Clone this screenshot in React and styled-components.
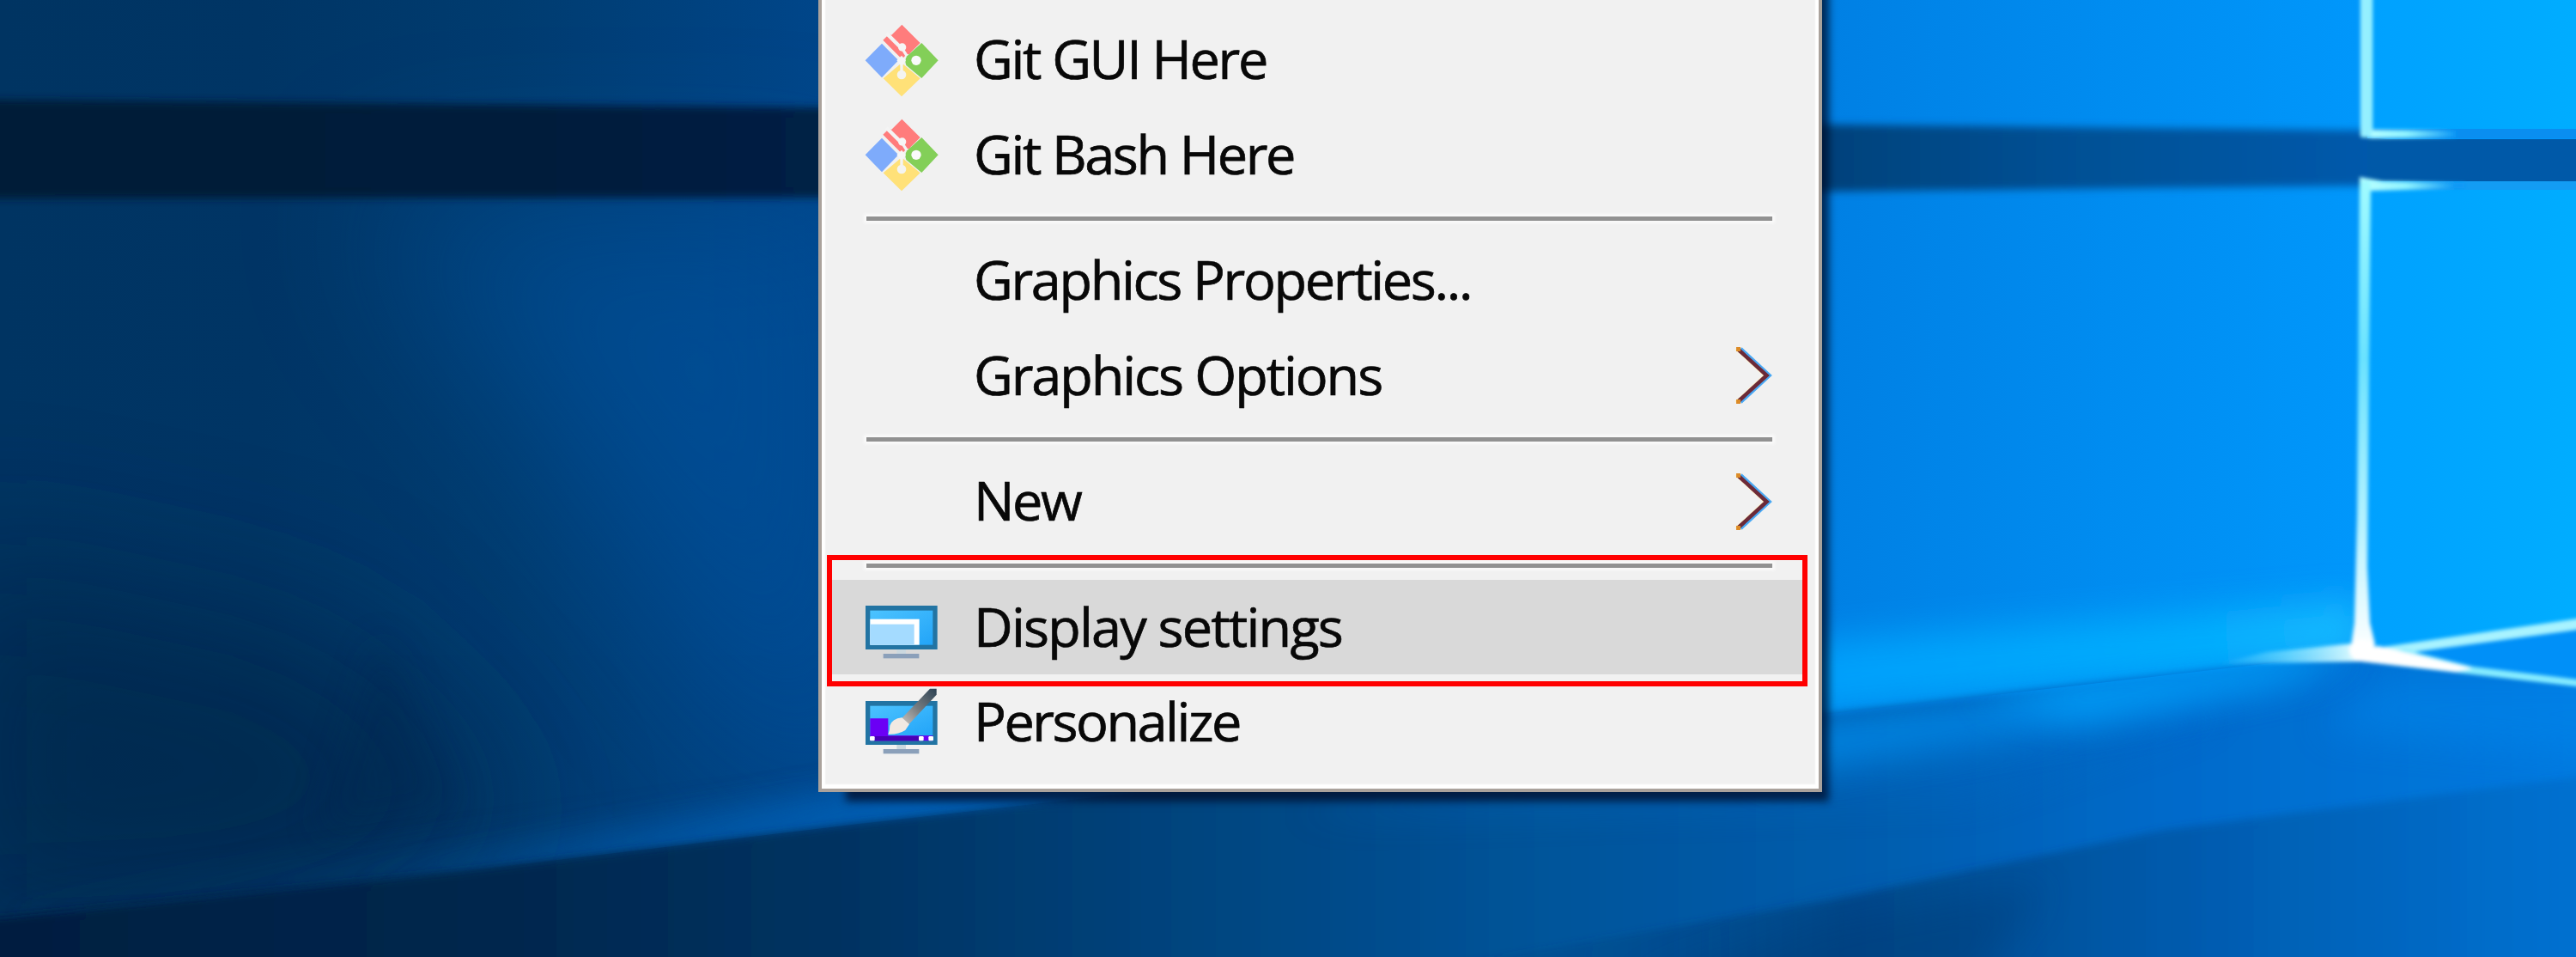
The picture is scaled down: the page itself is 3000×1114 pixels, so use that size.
import React from "react";
import styled, { createGlobalStyle } from "styled-components";

const GlobalStyle = createGlobalStyle`
  html, body { margin: 0; padding: 0; background: #003a70; }
  *, *::before, *::after { box-sizing: border-box; }
`;

const Desktop = styled.main`
  position: relative;
  display: flex;
  align-items: flex-start;
  width: 3000px;
  height: 1114px;
  overflow: hidden;
  font-family: "Open Sans", "Noto Sans", sans-serif;
`;

const WallpaperArt = styled.svg`
  position: absolute;
  inset: 0;
  width: 3000px;
  height: 1114px;
`;

const Menu = styled.nav`
  position: relative;
  display: flex;
  flex-direction: column;
  width: 1169px;
  height: 972px;
  margin-left: 953px;
  margin-top: -50px;
  padding-top: 64.3px;
  background: #f1f1f1;
  border: solid #aaa29c;
  border-width: 0 4px 4px 4px;
  box-shadow:
    inset 5px 0 2px -1px #fff,
    inset -5px 0 2px -1px #fff,
    inset 0 -6px 2px -1px #fff,
    20px 23px 9px -12px rgba(0, 12, 40, 0.75);
`;

const Item = styled.div`
  display: flex;
  align-items: center;
  height: 110.7px;
  flex: none;
  margin: 0 16px 0 9px;
  padding: 0 39px 0 42px;
  background: ${(p) => (p.$active ? "#d9d9d9" : "transparent")};
`;

const IconSlot = styled.span`
  display: flex;
  width: 84px;
  height: 84px;
  margin-right: 42px;

  svg {
    width: 84px;
    height: 84px;
    overflow: visible;
  }
`;

const Label = styled.span`
  flex: 1;
  margin-top: -3px;
  font-size: 63px;
  line-height: 80px;
  letter-spacing: ${(p) => p.$tracking}px;
  white-space: nowrap;
  color: #080808;
  -webkit-text-stroke: 0.7px #080808;
`;

const Separator = styled.div`
  flex: none;
  height: 5px;
  margin: 16.5px 54px 14.2px 52px;
  background: #919191;
  box-shadow: 0 0 3px 3px #fafafa;
`;

const ChevronArt = styled.svg`
  width: 42px;
  height: 66px;
  overflow: visible;
`;

const Highlight = styled.div`
  position: absolute;
  left: 963px;
  top: 646px;
  width: 1142px;
  height: 153px;
  border: 6px solid #ff0000;
`;

function GitIcon() {
  return (
    <svg viewBox="55 54 252 252">
      <path d="M182 56 L246 120 L213 153 Q208 164 200 158 L182 176 L116 110 L134 92 L146 92 Z" fill="#ff7c7c" />
      <path d="M128 86 L178 136" stroke="#f4f4f4" strokeWidth="13" />
      <circle cx="183" cy="135" r="14" fill="#f6f6f6" />
      <path d="M187 146 L200 166" stroke="#f4f4f4" strokeWidth="10" />
      <path d="M112 122 L170 181 L112 241 L54 181 Z" fill="#7eabfb" />
      <path d="M251 120 L309 181 L251 243 L197 198 Q190 181 200 166 Z" fill="#83cf58" />
      <circle cx="232" cy="181" r="17" fill="#fafafa" />
      <path d="M181 190 L246 244 L181 307 L117 244 Z" fill="#ffe178" />
      <path d="M181 188 V228" stroke="#f4f4f4" strokeWidth="10" />
      <circle cx="181" cy="231" r="16" fill="#f4f4f0" />
      <path d="M164 181 L181 164 L196 181 L181 202 Z" fill="#f6f6f6" />
    </svg>
  );
}

function ScreenGradient({ id }) {
  return (
    <linearGradient id={id} x1="0" y1="0" x2="1" y2="1">
      <stop offset="0" stopColor="#4cc3ff" />
      <stop offset="1" stopColor="#22a4f8" />
    </linearGradient>
  );
}

function DisplayIcon() {
  return (
    <svg viewBox="57 24 252 252">
      <defs>
        <ScreenGradient id="screenA" />
      </defs>
      <rect x="57" y="75" width="251" height="153" fill="#2274a3" />
      <rect x="73" y="92" width="219" height="120" fill="url(#screenA)" />
      <rect x="73" y="122" width="172" height="90" fill="#fff" />
      <rect x="73" y="140" width="154" height="72" fill="#a4dbff" />
      <rect x="166" y="228" width="32" height="15" fill="#cbd8df" />
      <rect x="119" y="243" width="125" height="16" fill="#8ba0ba" />
    </svg>
  );
}

function PersonalizeIcon() {
  return (
    <svg viewBox="57 357 252 252">
      <defs>
        <ScreenGradient id="screenB" />
        <linearGradient id="handle" x1="1" y1="0" x2="0" y2="1">
          <stop offset="0" stopColor="#2c4254" />
          <stop offset="0.55" stopColor="#777c80" />
          <stop offset="1" stopColor="#c9c4bf" />
        </linearGradient>
      </defs>
      <rect x="57" y="408" width="251" height="153" fill="#2274a3" />
      <rect x="73" y="425" width="219" height="104" fill="url(#screenB)" />
      <path d="M73 469 H136 V529 H292 V547 H73 Z" fill="#6b00f5" />
      <rect x="88" y="531" width="158" height="16" fill="#4a00b4" />
      <rect x="72" y="531" width="17" height="16" rx="4" fill="#fff" />
      <rect x="243" y="531" width="17" height="16" rx="4" fill="#fff" />
      <rect x="277" y="531" width="17" height="16" rx="4" fill="#fff" />
      <path d="M282 365 H305 V386 L208 490 L184 468 Z" fill="url(#handle)" />
      <path d="M184 466 L210 489 L196 510 Q170 526 136 524 Q142 512 142 494 Q150 470 184 466 Z" fill="#f1e9e2" />
      <rect x="166" y="561" width="32" height="15" fill="#cbd8df" />
      <rect x="119" y="576" width="125" height="16" fill="#8ba0ba" />
    </svg>
  );
}

function Chevron() {
  return (
    <ChevronArt viewBox="0 0 42 66" fill="none" strokeWidth="4.5">
      <path d="M6 2 L39.5 33 L6 64" stroke="#48a8f4" />
      <path d="M0.5 2 L34 33 L0.5 64" stroke="#fff3c8" strokeWidth="3" />
      <path d="M2.5 2 L36.5 33 L2.5 64" stroke="#6c2a38" />
      <path d="M1 0 H6 V5 H1 Z M1 61 H6 V66 H1 Z" fill="#dc8b28" stroke="none" />
    </ChevronArt>
  );
}

function Wallpaper() {
  return (
    <WallpaperArt viewBox="0 0 3000 1114" preserveAspectRatio="none">
      <defs>
        <linearGradient id="wall" gradientUnits="userSpaceOnUse" x1="0" y1="0" x2="3000" y2="0">
          <stop offset="0" stopColor="#003462" />
          <stop offset="0.1" stopColor="#003565" />
          <stop offset="0.2" stopColor="#003c70" />
          <stop offset="0.32" stopColor="#00468a" />
          <stop offset="0.71" stopColor="#0080e4" />
          <stop offset="0.8" stopColor="#008aee" />
          <stop offset="0.915" stopColor="#0097fb" />
        </linearGradient>
        <linearGradient id="bar" gradientUnits="userSpaceOnUse" x1="0" y1="0" x2="3000" y2="0">
          <stop offset="0" stopColor="#001a38" />
          <stop offset="0.2" stopColor="#001b3a" />
          <stop offset="0.32" stopColor="#002045" />
          <stop offset="0.71" stopColor="#00427c" />
          <stop offset="0.8" stopColor="#005094" />
          <stop offset="0.92" stopColor="#0059ab" />
          <stop offset="1" stopColor="#0058a6" />
        </linearGradient>
        <linearGradient id="floor" gradientUnits="userSpaceOnUse" x1="0" y1="0" x2="3000" y2="0">
          <stop offset="0" stopColor="#001e40" />
          <stop offset="0.2" stopColor="#00274e" />
          <stop offset="0.33" stopColor="#003362" />
          <stop offset="0.45" stopColor="#00437c" />
          <stop offset="0.6" stopColor="#00549a" />
          <stop offset="0.72" stopColor="#005cac" />
          <stop offset="0.84" stopColor="#006aca" />
          <stop offset="1" stopColor="#007ae0" />
        </linearGradient>
        <linearGradient id="horizonGlow" gradientUnits="userSpaceOnUse" x1="0" y1="1068" x2="2750" y2="760">
          <stop offset="0" stopColor="#003a6c" stopOpacity="0.4" />
          <stop offset="0.36" stopColor="#0064b8" />
          <stop offset="0.76" stopColor="#00a4ff" />
          <stop offset="0.93" stopColor="#00b4ff" />
          <stop offset="1" stopColor="#20c4ff" />
        </linearGradient>
        <linearGradient id="rayLeft" gradientUnits="userSpaceOnUse" x1="2580" y1="0" x2="2750" y2="0">
          <stop offset="0" stopColor="#50d0ff" stopOpacity="0" />
          <stop offset="0.5" stopColor="#74dcff" stopOpacity="0.8" />
          <stop offset="1" stopColor="#e8ffff" />
        </linearGradient>
        <linearGradient id="sill" gradientUnits="userSpaceOnUse" x1="2755" y1="0" x2="2860" y2="0">
          <stop offset="0" stopColor="#b8ffff" />
          <stop offset="0.45" stopColor="#90f4ff" />
          <stop offset="1" stopColor="#0c98f6" />
        </linearGradient>
        <linearGradient id="mullion" gradientUnits="userSpaceOnUse" x1="0" y1="0" x2="0" y2="760">
          <stop offset="0" stopColor="#84ecff" />
          <stop offset="0.28" stopColor="#a0fbff" />
          <stop offset="0.55" stopColor="#6ae2ff" />
          <stop offset="0.8" stopColor="#b4f2ff" />
          <stop offset="1" stopColor="#ffffff" />
        </linearGradient>
        <linearGradient id="pane" gradientUnits="userSpaceOnUse" x1="2760" y1="0" x2="3000" y2="0">
          <stop offset="0" stopColor="#00a1ff" />
          <stop offset="1" stopColor="#00adff" />
        </linearGradient>
        <linearGradient id="lowerFade" gradientUnits="userSpaceOnUse" x1="1700" y1="0" x2="3000" y2="0">
          <stop offset="0" stopColor="#003c74" stopOpacity="0.1" />
          <stop offset="0.35" stopColor="#003468" stopOpacity="0.5" />
          <stop offset="0.65" stopColor="#00407c" stopOpacity="0.38" />
          <stop offset="1" stopColor="#0058a8" stopOpacity="0.28" />
        </linearGradient>
        <filter id="b2" x="-20%" y="-50%" width="140%" height="200%"><feGaussianBlur stdDeviation="2" /></filter>
        <filter id="b5" x="-20%" y="-50%" width="140%" height="200%"><feGaussianBlur stdDeviation="5" /></filter>
        <filter id="b25" x="-50%" y="-50%" width="200%" height="200%"><feGaussianBlur stdDeviation="22" /></filter>
        <filter id="b90" x="-80%" y="-80%" width="260%" height="260%"><feGaussianBlur stdDeviation="90" /></filter>
        <clipPath id="aboveHorizon"><path d="M0 0 H2750 V760 L2130 831 L1000 959 L540 1014 L0 1068 Z" /></clipPath>
        <clipPath id="belowHorizon"><path d="M0 1068 L540 1014 L1000 959 L2130 831 L2750 760 L3000 795 V1114 H0 Z" /></clipPath>
      </defs>

      <rect width="3000" height="1114" fill="url(#wall)" />

      <g clipPath="url(#aboveHorizon)">
        <path d="M430 230 H1000 V960 L820 760 Z" fill="#0054a4" opacity="0.5" filter="url(#b90)" />
        <path d="M-80 640 L380 740 L620 960 L300 1080 L-80 1100 Z" fill="#00264a" opacity="0.7" filter="url(#b90)" />
        <path d="M445 740 L530 940 L370 970 Z" fill="#002850" opacity="0.4" filter="url(#b25)" />
        <path d="M0 1068 L1000 959 L2130 831 L2750 760 V700 L2130 745 L1000 930 L0 1062 Z" fill="url(#horizonGlow)" opacity="0.85" filter="url(#b25)" />
        <path d="M420 1040 L1000 972 L1300 930 V890 L1000 925 Z" fill="#0064bc" opacity="0.7" filter="url(#b25)" />
      </g>

      <path d="M-20 116 L950 125 L2130 145 L2775 152 V216 L2130 223 L950 230 L-20 231 Z" fill="url(#bar)" filter="url(#b5)" />

      <path d="M-20 1070 L540 1014 L1000 959 L2130 831 L2750 760 L3040 800 V1140 H-20 Z" fill="url(#floor)" filter="url(#b5)" />

      <g clipPath="url(#belowHorizon)">
        <path d="M1500 950 L2130 860 L2600 830 L2300 930 Z" fill="#006cc8" opacity="0.3" filter="url(#b25)" />
        <path d="M2750 765 L2700 785 L2480 835 L2050 905 L2050 845 Z" fill="#0090f0" opacity="0.75" filter="url(#b25)" />
        <path d="M2750 745 L2660 790 L2420 835 L2300 810 Z" fill="#00a6ff" opacity="0.8" filter="url(#b25)" />
        <path d="M2780 790 H3060 V880 L2700 850 Z" fill="#0088ee" opacity="0.45" filter="url(#b25)" />
        <path d="M1650 1130 L2130 1048 L2520 966 L3020 902 V1140 H1650 Z" fill="url(#lowerFade)" filter="url(#b5)" />
        <path d="M1900 1150 L2130 1070 L2380 1030 L2300 1150 Z" fill="#003a74" opacity="0.4" filter="url(#b25)" />
      </g>

      <rect x="2757" y="-10" width="260" height="160" fill="url(#pane)" />
      <rect x="2757" y="150" width="260" height="11" fill="#0a8ef0" />
      <rect x="2757" y="162" width="260" height="49" fill="#0059a8" />
      <path d="M2757 218 H3010 V724 L2752 764 Z" fill="url(#pane)" />
      <path d="M2752 762 L3010 725 V800 Z" fill="#0090f8" />
      <rect x="2757" y="211" width="260" height="10" fill="#139cf4" />

      <g filter="url(#b2)">
        <path d="M2749 -10 H2763 V151 L2860 152 V160 L2762 161 L2749 159 Z" fill="url(#sill)" />
        <path d="M2748 206 L2775 211 L2870 213 V219 L2763 222 H2748 Z" fill="url(#sill)" />
        <rect x="2750" y="-10" width="12" height="170" fill="#94f0ff" />
        <path d="M2748 210 H2761 L2757 660 L2760 725 L2766 750 L2752 770 L2738 752 L2742 725 L2745 600 Z" fill="url(#mullion)" />
        <path d="M2750 748 L2750 770 L2580 773 L2640 759 Z" fill="url(#rayLeft)" />
        <path d="M2748 757 L3010 719 V732 L2760 766 Z" fill="#a8f3ff" />
        <path d="M2750 762 L2800 756 L2880 776 L3010 792 V800 L2870 784 L2750 770 Z" fill="#86ecff" />
        <path d="M2750 770 L2735 756 L2770 752 L2880 778 L2860 782 Z" fill="#ffffff" />
        <ellipse cx="2751" cy="757" rx="15" ry="13" fill="#ffffff" />
      </g>
    </WallpaperArt>
  );
}

const SEPARATOR = "separator";

const entries = [
  { label: "Git GUI Here", icon: GitIcon, tracking: -2.35 },
  { label: "Git Bash Here", icon: GitIcon, tracking: -2.4 },
  SEPARATOR,
  { label: "Graphics Properties...", tracking: -2.35 },
  { label: "Graphics Options", submenu: true, tracking: -2.1 },
  SEPARATOR,
  { label: "New", submenu: true, tracking: -2.4 },
  SEPARATOR,
  { label: "Display settings", icon: DisplayIcon, active: true, tracking: -1.82 },
  { label: "Personalize", icon: PersonalizeIcon, tracking: -2.5 },
];

export default function App() {
  return (
    <Desktop>
      <GlobalStyle />
      <Wallpaper />
      <Menu>
        {entries.map((entry, i) => {
          if (entry === SEPARATOR) return <Separator key={i} />;
          const Icon = entry.icon;
          return (
            <Item key={i} $active={entry.active}>
              <IconSlot>{Icon && <Icon />}</IconSlot>
              <Label $tracking={entry.tracking}>{entry.label}</Label>
              {entry.submenu && <Chevron />}
            </Item>
          );
        })}
      </Menu>
      <Highlight />
    </Desktop>
  );
}
